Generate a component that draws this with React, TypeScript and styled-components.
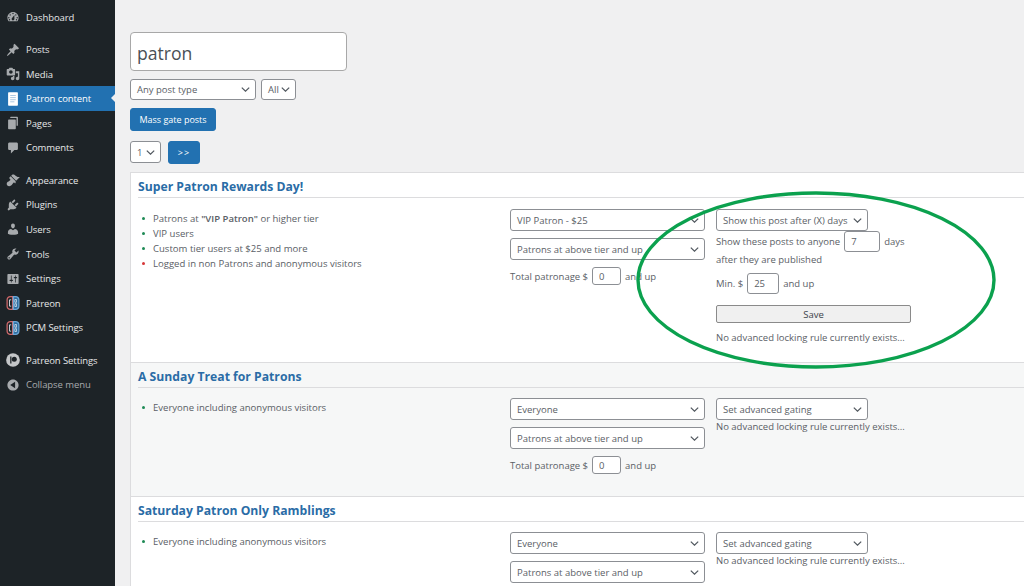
import React from "react";
import styled, { createGlobalStyle } from "styled-components";

const Global = createGlobalStyle`
  html, body { margin: 0; padding: 0; background: #f0f0f1; }
  body { font-family: "Open Sans", "Noto Sans", sans-serif; overflow: hidden; }
  #root { width: 1024px; height: 586px; }
`;

const Page = styled.div`
  position: relative;
  display: flex;
  width: 1024px;
  height: 586px;
  overflow: hidden;
  background: #f0f0f1;
`;

const Sidebar = styled.nav`
  flex: 0 0 115px;
  height: 586px;
  box-sizing: border-box;
  padding-top: 5px;
  background: #1d2327;
`;

const MenuRow = styled.div<{ $active?: boolean; $gap?: boolean; $muted?: boolean }>`
  position: relative;
  display: flex;
  align-items: center;
  height: 24.6px;
  margin-top: ${(p) => (p.$gap ? "7.7px" : "0")};
  padding-left: 6px;
  gap: 6px;
  font-size: 9.5px;
  letter-spacing: -0.08px;
  background: ${(p) => (p.$active ? "#2271b1" : "transparent")};
  color: ${(p) => (p.$active ? "#fff" : p.$muted ? "#a7aaad" : "#e6e7e8")};
  ${(p) =>
    p.$active
      ? `&::after {
          content: "";
          position: absolute;
          right: 0;
          top: 8px;
          border: 4.5px solid transparent;
          border-right-color: #f0f0f1;
          border-left-width: 0;
        }`
      : ""}
`;

const MenuIcon = styled.svg`
  flex: 0 0 14px;
  width: 14px;
  height: 14px;
  fill: #a7aaad;
`;

const Main = styled.main`
  flex: 1;
  min-width: 0;
  padding: 32px 0 0 15px;
  color: #5a6066;
`;

const Search = styled.input`
  display: block;
  box-sizing: border-box;
  width: 217px;
  height: 39px;
  padding: 2px 6px 0;
  border: 1px solid #a8a8a8;
  border-radius: 4px;
  background: #fff;
  color: #4a5056;
  font: 17.6px "Open Sans", sans-serif;
  outline: none;
`;

const ToolRow = styled.div<{ $top: number; $gap?: number }>`
  display: flex;
  gap: ${(p) => p.$gap ?? 5}px;
  margin-top: ${(p) => p.$top}px;
  align-items: flex-start;
`;

const Drop = styled.div<{ $w: number; $h?: number; $top?: number }>`
  display: flex;
  align-items: center;
  justify-content: space-between;
  box-sizing: border-box;
  width: ${(p) => p.$w}px;
  height: ${(p) => p.$h ?? 22}px;
  margin-top: ${(p) => p.$top ?? 0}px;
  padding: 0 5px 0 6px;
  border: 1px solid #8c8f94;
  border-radius: 3px;
  background: #fff;
  color: #5a6066;
  font-size: 9.5px;
  white-space: nowrap;
`;

const Chevron = styled.svg`
  flex: 0 0 9px;
  width: 9px;
  height: 5px;
  fill: none;
  stroke: #50575e;
  stroke-width: 1.2;
`;

const BlueButton = styled.button<{ $w: number; $h: number; $spaced?: boolean }>`
  width: ${(p) => p.$w}px;
  height: ${(p) => p.$h}px;
  padding: 0;
  border: 1px solid #2271b1;
  border-radius: 3px;
  background: #2271b1;
  color: #fff;
  font: 9px "Open Sans", sans-serif;
  letter-spacing: ${(p) => (p.$spaced ? "1px" : "0")};
`;

const Card = styled.section<{ $h: number; $shade?: boolean }>`
  box-sizing: border-box;
  height: ${(p) => p.$h}px;
  width: 894px;
  padding-left: 7px;
  border-left: 1px solid #dcdcde;
  border-top: 1px solid #dcdcde;
  background: ${(p) => (p.$shade ? "#f6f7f7" : "#fff")};
`;

const CardTitle = styled.h2`
  margin: 0;
  height: 25px;
  line-height: 27px;
  box-sizing: border-box;
  border-bottom: 1px solid #dcdcde;
  color: #2a6ca6;
  font-size: 12.2px;
  font-weight: 700;
`;

const CardBody = styled.div<{ $pad: number }>`
  display: flex;
  padding-top: ${(p) => p.$pad}px;
`;

const RuleCol = styled.ul`
  flex: 0 0 372px;
  margin: 0;
  padding: 2px 0 0 15px;
  box-sizing: border-box;
  list-style: none;
`;

const Rule = styled.li<{ $bad?: boolean }>`
  position: relative;
  height: 15px;
  line-height: 15px;
  font-size: 9.55px;
  white-space: nowrap;
  &::before {
    content: "";
    position: absolute;
    left: -11px;
    top: 6px;
    width: 3px;
    height: 3px;
    border-radius: 50%;
    background: ${(p) => (p.$bad ? "#d63638" : "#1e8a55")};
  }
  b {
    font-weight: 600;
  }
`;

const TierCol = styled.div`
  flex: 0 0 195px;
  margin-right: 11px;
`;

const GateCol = styled.div`
  flex: 0 0 300px;
`;

const Line = styled.div<{ $h: number; $top?: number }>`
  display: flex;
  align-items: center;
  height: ${(p) => p.$h}px;
  margin-top: ${(p) => p.$top ?? 0}px;
  gap: 4px;
  font-size: 9.5px;
  white-space: nowrap;
`;

const Num = styled.input<{ $w: number; $h: number }>`
  box-sizing: border-box;
  width: ${(p) => p.$w}px;
  height: ${(p) => p.$h}px;
  padding: 0 6px;
  border: 1px solid #8c8f94;
  border-radius: 3px;
  background: #fff;
  color: #5a6066;
  font: 9.5px "Open Sans", sans-serif;
  outline: none;
`;

const SaveButton = styled.button`
  display: block;
  box-sizing: border-box;
  width: 195px;
  height: 18px;
  margin-top: 11px;
  padding: 0;
  border: 1px solid #8a8a8a;
  border-radius: 2px;
  background: #f0f0f0;
  color: #3c434a;
  font: 9.5px "Open Sans", sans-serif;
`;

const Circle = styled.svg`
  position: absolute;
  left: 630px;
  top: 185px;
  width: 372px;
  height: 190px;
  pointer-events: none;
`;

const icons: Record<string, React.ReactNode> = {
  dashboard: <path d="M3.76 16h12.48c1.1-1.37 1.76-3.11 1.76-5 0-4.42-3.58-8-8-8s-8 3.58-8 8c0 1.89.66 3.63 1.76 5zM10 4c.55 0 1 .45 1 1s-.45 1-1 1-1-.45-1-1 .45-1 1-1zM6 6c.55 0 1 .45 1 1s-.45 1-1 1-1-.45-1-1 .45-1 1-1zm8 0c.55 0 1 .45 1 1s-.45 1-1 1-1-.45-1-1 .45-1 1-1zm-5.37 5.55L12 7v6c0 1.1-.9 2-2 2s-2-.9-2-2c0-.57.24-1.08.63-1.45zM4 10c.55 0 1 .45 1 1s-.45 1-1 1-1-.45-1-1 .45-1 1-1zm12 0c.55 0 1 .45 1 1s-.45 1-1 1-1-.45-1-1 .45-1 1-1zM5 13c.55 0 1 .45 1 1s-.45 1-1 1-1-.45-1-1 .45-1 1-1zm10 0c.55 0 1 .45 1 1s-.45 1-1 1-1-.45-1-1 .45-1 1-1z" />,
  pin: <path d="M10.44 3.02l1.82-1.82 6.36 6.35-1.83 1.82c-1.05-.68-2.48-.57-3.41.36l-.75.75c-.92.93-1.04 2.35-.35 3.41l-1.83 1.82-2.41-2.41-2.8 2.79c-.42.42-3.38 2.71-3.8 2.29s1.86-3.39 2.28-3.81l2.79-2.79L4.1 9.36l1.83-1.82c1.05.69 2.48.57 3.4-.36l.75-.75c.93-.92 1.05-2.35.36-3.41z" />,
  media: <path fillRule="evenodd" d="M13 11V4c0-.55-.45-1-1-1h-1.67L9 1H5L3.67 3H2c-.55 0-1 .45-1 1v7c0 .55.45 1 1 1h10c.55 0 1-.45 1-1zM7 4.5c1.38 0 2.5 1.12 2.5 2.5S8.38 9.5 7 9.5 4.5 8.38 4.5 7 5.62 4.5 7 4.5zM14 6h5v10.5c0 1.38-1.12 2.5-2.5 2.5S14 17.88 14 16.5s1.12-2.5 2.5-2.5c.17 0 .34.02.5.05V9h-3V6zm-4 8.05V13h2v3.5c0 1.38-1.12 2.5-2.5 2.5S7 17.88 7 16.5 8.12 14 9.5 14c.17 0 .34.02.5.05z" />,
  doc: (
    <g>
      <rect x="3" y="0.5" width="14" height="19" rx="1" fill="#fff" />
      <path d="M6 5h8M6 8h8M6 11h8M6 14h6" stroke="#9dbfdc" strokeWidth="1.2" />
    </g>
  ),
  pages: <path d="M7 1h9c.6 0 1 .4 1 1v12h-2V3H6V2c0-.6.4-1 1-1zM4 5h9c.6 0 1 .4 1 1v12c0 .6-.4 1-1 1H4c-.6 0-1-.4-1-1V6c0-.6.4-1 1-1z" />,
  comments: <path d="M5 2h10c1.1 0 2 .9 2 2v7c0 1.1-.9 2-2 2h-3l-5 5v-5H5c-1.1 0-2-.9-2-2V4c0-1.1.9-2 2-2z" />,
  brush: <path d="M14.48 11.06L7.41 3.99l1.5-1.5c.5-.56 2.3-.47 3.51.32 1.21.8 1.43 1.28 2.91 2.1 1.18.64 2.45 1.26 4.45.85zm-.71.71L6.7 4.7 4.93 6.47c-.39.39-.39 1.02 0 1.41l1.06 1.06c.39.39.39 1.03 0 1.42-.6.6-1.43 1.11-2.21 1.69C2.5 11.9 1 13.5 1 15.5 1 17.5 2.5 19 4.5 19c2 0 3.6-1.5 4.5-2.8.6-.8 1.1-1.6 1.7-2.2.39-.39 1.03-.39 1.42 0l.23.23c.39.39 1.02.39 1.41 0z" />,
  plugin: <path d="M13.11 4.36L9.87 7.6 8 5.73l3.24-3.24c.35-.34 1.05-.2 1.56.32.52.51.66 1.21.31 1.55zm-8 1.77l.91-1.12 9.01 9.01-1.19.84c-.71.71-2.63 1.16-3.82 1.16H6.14L4.9 17.26c-.59.59-1.54.59-2.12 0-.59-.58-.59-1.53 0-2.12l1.24-1.24v-3.88c0-1.13.4-3.19 1.09-3.89zm7.26 3.97l3.24-3.24c.34-.35 1.04-.21 1.55.31.52.51.66 1.21.31 1.55l-3.24 3.25z" />,
  users: <path d="M10 9.25c-2.27 0-2.73-3.44-2.73-3.44C7 4.02 7.82 2 9.97 2c2.16 0 2.98 2.02 2.71 3.81 0 0-.41 3.44-2.68 3.44zm0 2.57L12.72 10c2.39 0 4.52 2.33 4.52 4.53v2.49s-3.65 1.13-7.24 1.13c-3.65 0-7.24-1.13-7.24-1.13v-2.49c0-2.25 1.94-4.48 4.47-4.48z" />,
  tools: <path d="M16.68 9.77c-1.34 1.34-3.3 1.67-4.95.99l-5.41 6.52c-.99.99-2.59.99-3.58 0s-.99-2.59 0-3.57l6.52-5.42c-.68-1.65-.35-3.61.99-4.95 1.28-1.28 3.12-1.62 4.72-1.06l-2.89 2.89 2.82 2.82 2.86-2.87c.53 1.58.18 3.39-1.08 4.65zM3.81 16.21c.4.39 1.04.39 1.43 0 .4-.4.4-1.04 0-1.43-.39-.4-1.03-.4-1.43 0-.39.39-.39 1.03 0 1.43z" />,
  settings: <path fillRule="evenodd" d="M18 16V4c0-.55-.45-1-1-1H3c-.55 0-1 .45-1 1v12c0 .55.45 1 1 1h14c.55 0 1-.45 1-1zM8 11h1c.55 0 1 .45 1 1s-.45 1-1 1H8v1.5c0 .28-.22.5-.5.5s-.5-.22-.5-.5V13H6c-.55 0-1-.45-1-1s.45-1 1-1h1V5.5c0-.28.22-.5.5-.5s.5.22.5.5V11zm5-2h-1c-.55 0-1-.45-1-1s.45-1 1-1h1V5.5c0-.28.22-.5.5-.5s.5.22.5.5V7h1c.55 0 1 .45 1 1s-.45 1-1 1h-1v5.5c0 .28-.22.5-.5.5s-.5-.22-.5-.5V9z" />,
  pcm: (
    <g fill="none">
      <path d="M9.4 1H6.2A4.4 4.4 0 0 0 1.6 5.4v9.2A4.4 4.4 0 0 0 6.2 19h3.2z" stroke="#d0696b" strokeWidth="1.8" />
      <path d="M10.6 1h3.2a4.4 4.4 0 0 1 4.6 4.4v9.2a4.4 4.4 0 0 1-4.6 4.4h-3.2z" stroke="#6aa6d6" strokeWidth="1.8" fill="#2f6ea0" />
      <path d="M12.6 5h2.4v4h-2.4zM12.6 11h2.4v4h-2.4z" stroke="#e6eef5" strokeWidth="1" />
      <path d="M7.4 5.5H5v9h2.4" stroke="#e6eef5" strokeWidth="1.2" />
    </g>
  ),
  patreon: (
    <g>
      <circle cx="10" cy="10" r="9.8" fill="#c4c6c8" />
      <rect x="6" y="5" width="1.8" height="10" fill="#1d2327" />
      <circle cx="11.8" cy="8.8" r="3.6" fill="#1d2327" />
    </g>
  ),
  collapse: <path fillRule="evenodd" d="M18 10c0-4.42-3.58-8-8-8s-8 3.58-8 8 3.58 8 8 8 8-3.58 8-8zm-5 4.5L6 10l7-4.5z" />,
};

const menu: { label: string; icon: string; gap?: boolean; active?: boolean; muted?: boolean }[] = [
  { label: "Dashboard", icon: "dashboard" },
  { label: "Posts", icon: "pin", gap: true },
  { label: "Media", icon: "media" },
  { label: "Patron content", icon: "doc", active: true },
  { label: "Pages", icon: "pages" },
  { label: "Comments", icon: "comments" },
  { label: "Appearance", icon: "brush", gap: true },
  { label: "Plugins", icon: "plugin" },
  { label: "Users", icon: "users" },
  { label: "Tools", icon: "tools" },
  { label: "Settings", icon: "settings" },
  { label: "Patreon", icon: "pcm" },
  { label: "PCM Settings", icon: "pcm" },
  { label: "Patreon Settings", icon: "patreon", gap: true },
  { label: "Collapse menu", icon: "collapse", muted: true },
];

const Select = ({ w, h, top, children }: { w: number; h?: number; top?: number; children: React.ReactNode }) => (
  <Drop $w={w} $h={h} $top={top}>
    <span>{children}</span>
    <Chevron viewBox="0 0 9 5">
      <path d="M.8.6l3.7 3.6L8.2.6" />
    </Chevron>
  </Drop>
);

const Tier = ({ label, total = true }: { label: string; total?: boolean }) => (
  <TierCol>
    <Select w={195}>{label}</Select>
    <Select w={195} top={7}>Patrons at above tier and up</Select>
    {total && (
      <Line $h={18} $top={7}>
        Total patronage $ <Num $w={29} $h={18} defaultValue="0" /> and up
      </Line>
    )}
  </TierCol>
);

const NoRule = ({ h }: { h: number }) => <Line $h={h}>No advanced locking rule currently exists...</Line>;

export default function App() {
  return (
    <Page>
      <Global />
      <Sidebar>
        {menu.map((m) => (
          <MenuRow key={m.label} $active={m.active} $gap={m.gap} $muted={m.muted}>
            <MenuIcon viewBox="0 0 20 20">{icons[m.icon]}</MenuIcon>
            {m.label}
          </MenuRow>
        ))}
      </Sidebar>
      <Main>
        <Search defaultValue="patron" />
        <ToolRow $top={8}>
          <Select w={126} h={21}>Any post type</Select>
          <Select w={35} h={21}>All</Select>
        </ToolRow>
        <ToolRow $top={8}>
          <BlueButton $w={86} $h={23}>Mass gate posts</BlueButton>
        </ToolRow>
        <ToolRow $top={10} $gap={7}>
          <Select w={31}>1</Select>
          <BlueButton $w={32} $h={23} $spaced>&gt;&gt;</BlueButton>
        </ToolRow>
        <ToolRow $top={8} />
        <Card $h={190}>
          <CardTitle>Super Patron Rewards Day!</CardTitle>
          <CardBody $pad={11}>
            <RuleCol>
              <Rule>Patrons at <b>"VIP Patron"</b> or higher tier</Rule>
              <Rule>VIP users</Rule>
              <Rule>Custom tier users at $25 and more</Rule>
              <Rule $bad>Logged in non Patrons and anonymous visitors</Rule>
            </RuleCol>
            <Tier label="VIP Patron - $25" />
            <GateCol>
              <Select w={152}>Show this post after (X) days</Select>
              <Line $h={21}>
                Show these posts to anyone <Num $w={36} $h={21} defaultValue="7" /> days
              </Line>
              <Line $h={14}>after they are published</Line>
              <Line $h={21} $top={7}>
                Min. $ <Num $w={32} $h={21} defaultValue="25" /> and up
              </Line>
              <SaveButton>Save</SaveButton>
              <Line $h={14} $top={7}>No advanced locking rule currently exists...</Line>
            </GateCol>
          </CardBody>
        </Card>
        <Card $h={134} $shade>
          <CardTitle>A Sunday Treat for Patrons</CardTitle>
          <CardBody $pad={10}>
            <RuleCol>
              <Rule>Everyone including anonymous visitors</Rule>
            </RuleCol>
            <Tier label="Everyone" />
            <GateCol>
              <Select w={152}>Set advanced gating</Select>
              <NoRule h={12} />
            </GateCol>
          </CardBody>
        </Card>
        <Card $h={90}>
          <CardTitle>Saturday Patron Only Ramblings</CardTitle>
          <CardBody $pad={10}>
            <RuleCol>
              <Rule>Everyone including anonymous visitors</Rule>
            </RuleCol>
            <Tier label="Everyone" total={false} />
            <GateCol>
              <Select w={152}>Set advanced gating</Select>
              <NoRule h={12} />
            </GateCol>
          </CardBody>
        </Card>
      </Main>
      <Circle viewBox="0 0 372 190">
        <ellipse cx="186" cy="95" rx="178" ry="87" fill="none" stroke="#0ba14e" strokeWidth="3.4" />
      </Circle>
    </Page>
  );
}
